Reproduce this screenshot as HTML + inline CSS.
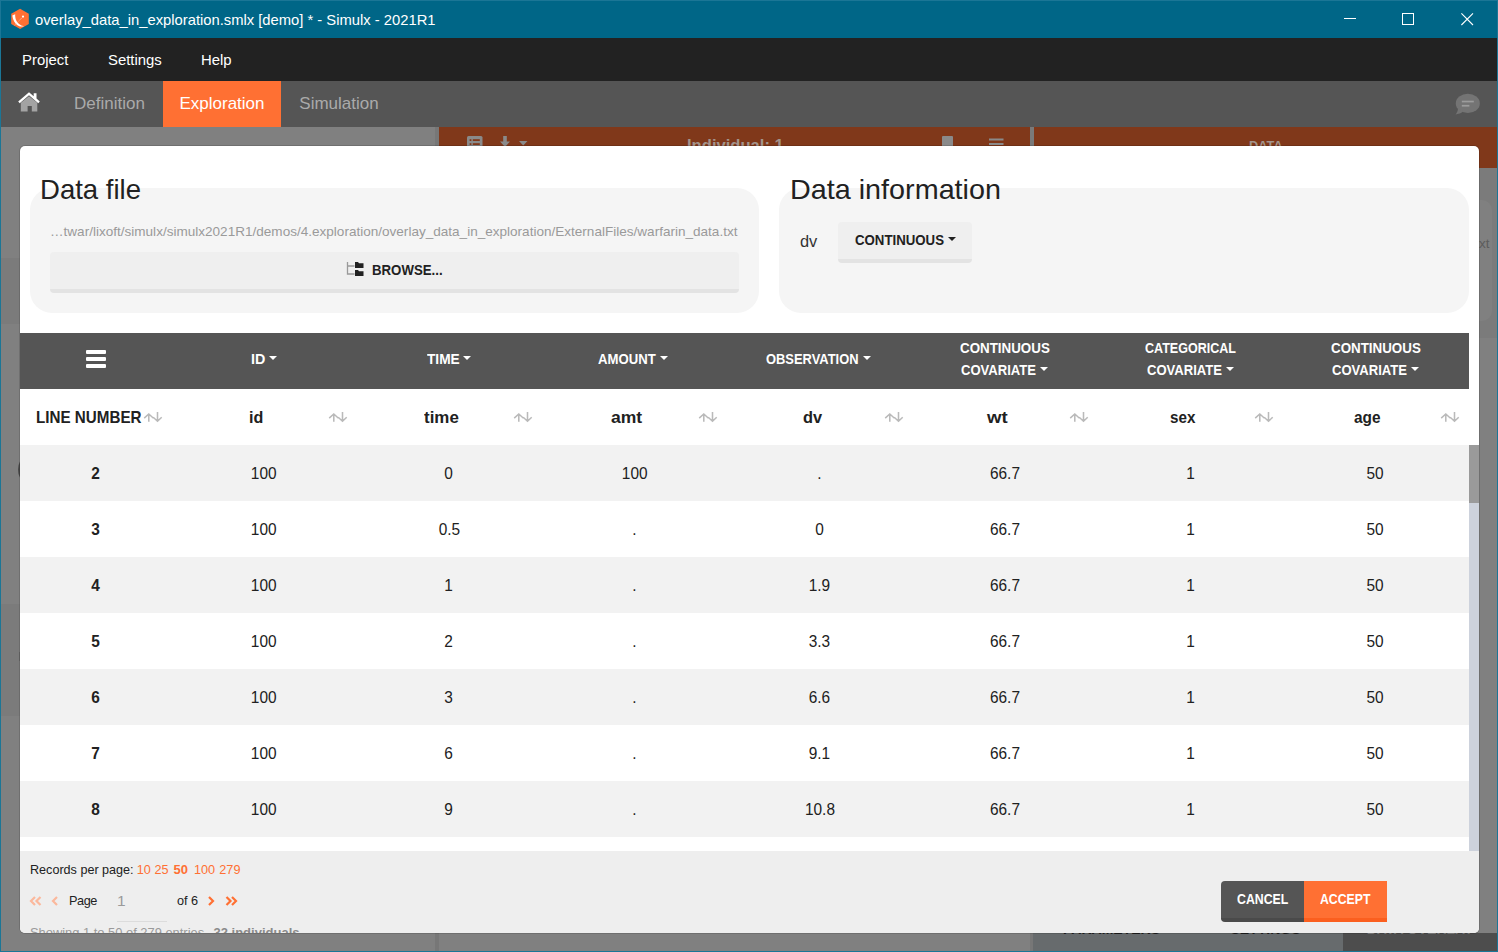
<!DOCTYPE html>
<html lang="en"><head><meta charset="utf-8"><title>Simulx</title>
<style>
*{box-sizing:border-box;margin:0;padding:0}
html,body{width:1498px;height:952px;overflow:hidden;background:#808080}
body{font-family:"Liberation Sans",sans-serif;color:#212121}
#win{position:relative;width:1498px;height:952px;overflow:hidden;background:#808080}
.abs{position:absolute}
.tx{display:inline-block;white-space:nowrap}
.fw{display:inline-block;white-space:nowrap;text-align:left}
.fi{display:inline-block;white-space:nowrap;transform-origin:0 50%}
/* title bar */
#title{position:absolute;left:0;top:0;width:1498px;height:38px;background:#006687;border-top:1px solid #1b7696}
#title .ttl{position:absolute;left:35px;top:9px;font-size:14.78px;color:#fff;white-space:nowrap;line-height:20px}
#edgeL{position:absolute;left:0;top:0;width:1px;height:952px;background:#1b7696;z-index:50}
#edgeR{position:absolute;right:0;top:0;width:1px;height:952px;background:#1b7696;z-index:50}
#edgeB{position:absolute;left:0;bottom:0;width:1498px;height:1px;background:#1b7696;z-index:50}
/* menu */
#menu{position:absolute;left:1px;top:38px;width:1496px;height:43px;background:#222}
#menu span{position:absolute;top:12px;font-size:14.9px;color:#fff;line-height:20px}
/* tabs */
#tabs{position:absolute;left:1px;top:81px;width:1496px;height:46px;background:#555}
#tabs .tab{position:absolute;top:0;height:46px;line-height:46px;font-size:17px;color:#aaa;text-align:center}
#tabs .tab.act{background:#ff7033;color:#fff}
/* background stuff */
.brown{position:absolute;background:#80381a}
/* modal */
#modal{position:absolute;left:20px;top:146px;width:1459px;height:787px;background:#fff;border-radius:5px;overflow:hidden;box-shadow:0 0 0 1px rgba(0,0,0,.13)}
.panel{position:absolute;background:#f5f5f5;border-radius:22px}
.h1{position:absolute;font-size:27.2px;line-height:34px;color:#212121;white-space:nowrap}
.path{position:absolute;left:30px;top:77px;font-size:13.56px;line-height:18px;color:#9a9a9a;white-space:nowrap}
.btn{position:absolute;background:#efefef;border-bottom:4px solid #e3e3e3;border-radius:4px;font-weight:bold;font-size:14.2px;color:#212121;text-align:center}
/* table */
.thead{position:absolute;left:0;top:187px;width:1449px;height:56px;background:#555}
.burger{position:absolute;left:65.5px;top:17px;width:20.5px;height:18px}
.burger i{display:block;height:4px;border-radius:1px;background:#fff;margin-bottom:3px}
.th{position:absolute;top:0;height:56px;color:#fff;font-weight:bold;font-size:14.2px;text-align:center;white-space:nowrap}
.th.one{line-height:52px}
.th.two{line-height:22px;padding-top:4px}
.caret{display:inline-block;width:0;height:0;border-left:4.3px solid transparent;border-right:4.3px solid transparent;border-top:4.6px solid #fff;margin-left:4px;vertical-align:middle;position:relative;top:-2.5px}
.subhead{position:absolute;left:0;top:243px;width:1449px;height:56px;background:#fff}
.sh{position:absolute;top:0;height:56px;line-height:56px;font-weight:bold;font-size:17.3px;color:#212121;text-align:center;padding-right:13px}
.sh .sort{position:absolute;right:8.5px;top:22px}
.sh.first{line-height:58px;text-align:left;padding-left:15.500px;padding-right:0;font-size:16.6px}
.sh.first .sort{right:auto;left:123.2px}
.tbody{position:absolute;left:0;top:299px;width:1449px;height:406px;overflow:hidden;background:#fff}
.tr{position:absolute;left:0;width:1449px;height:56px;background:#fff}
.tr.odd{background:#f2f2f2}
.td{position:absolute;top:0;height:56px;line-height:56px;text-align:center;font-size:16.4px;color:#212121}
.sq{display:inline-block;transform:scaleX(.94)}
.td.b{font-weight:bold}
.sbar{position:absolute;left:1449px;top:299px;width:10px;height:406px;background:#cdd2dc}
.sbar i{position:absolute;left:0;top:0;width:10px;height:58px;background:#9a9a9a}
.foot{position:absolute;left:0;top:705px;width:1459px;height:81.5px;background:#eee}
.foot .t{position:absolute;font-size:12.7px;line-height:18px;color:#212121;white-space:nowrap}
.or,.foot .t.or{color:#ff7033}

</style></head>
<body>
<div id="win">
<div id="title">
<svg class="abs" style="left:10px;top:7px" width="20" height="22" viewBox="0 0 20 22"><polygon points="10.1,0.8 18.8,5.8 18.8,16.1 10.1,21.1 1.2,16.1 1.2,5.8" fill="#ff7033"/><path d="M2.300 7.600C3 12.200 4.800 15.800 7.800 17.400S11.500 18.700 14.100 18.300C10.200 17.400 7.300 15.300 6 12C5.300 10 5.100 8.200 5.200 6.300Z" fill="#fff"/><path d="M4.600 17.300L12.300 9.400" fill="none" stroke="#ffe3d6" stroke-width="0.7" stroke-dasharray="1.1 0.7"/><circle cx="13" cy="8.600" r="1.100" fill="#fff"/></svg>
<div class="ttl">overlay_data_in_exploration.smlx [demo] * - Simulx - 2021R1</div>
<svg class="abs" style="left:1344px;top:17px" width="14" height="2"><rect width="12" height="1" y="0" fill="#fff"/></svg>
<svg class="abs" style="left:1402px;top:12px" width="13" height="13"><rect x="0.5" y="0.5" width="11" height="11" fill="none" stroke="#fff" stroke-width="1"/></svg>
<svg class="abs" style="left:1461px;top:12px" width="14" height="14"><path d="M0.400 0.400l11.600 11.600M12 0.400l-11.600 11.600" stroke="#fff" stroke-width="1.100" fill="none"/></svg>
</div>
<div id="menu"><span style="left:21px">Project</span><span style="left:107px">Settings</span><span style="left:200px">Help</span></div>
<div id="tabs">
<svg class="abs" style="left:16px;top:10px" width="24" height="22" viewBox="0 0 24 22"><path d="M3.800 11.800L12 5.200l8.300 6.600V20.400h-5.500v-5.400h-4.200V20.400H3.800z" fill="#a3a3a3"/><path d="M12 1.200L1.200 10.400l1.500 1.800L12 4.300l9.300 7.900 1.500-1.800-3.300-2.800V2.200h-2.800v3z" fill="#fff"/></svg>
<div class="tab" style="left:55px;width:107px">Definition</div>
<div class="tab act" style="left:162px;width:118px">Exploration</div>
<div class="tab" style="left:280px;width:116px">Simulation</div>
<svg class="abs" style="left:1453px;top:12px" width="27" height="23" viewBox="0 0 27 23"><ellipse cx="13.800" cy="10.400" rx="12" ry="9.600" fill="#747474"/><path d="M4 15.500C3.800 18 3 20 1.500 21.400 4.500 21.200 7 20.200 9 18.500z" fill="#747474"/><rect x="7.800" y="7.700" width="12" height="1.700" fill="#9c9c9c"/><rect x="7.800" y="11.900" width="7.600" height="1.700" fill="#9c9c9c"/></svg>
</div>
<!-- background (dimmed app) -->
<div class="abs" style="left:435px;top:127px;width:4px;height:825px;background:#777"></div>
<div class="abs" style="left:1px;top:258px;width:19px;height:66px;background:#7b7b7b"></div>
<div class="abs" style="left:1px;top:604px;width:19px;height:112px;background:#7b7b7b"></div>
<div class="abs" style="left:17.500px;top:459px;width:12px;height:21px;border-radius:50%;border-left:2px solid #484848"></div>
<div class="abs" style="left:18.500px;top:652px;width:3px;height:9px;background:#6a6a6a"></div>
<div class="abs" style="left:1470px;top:168px;width:27px;height:170px;background:#7b7b7b"></div>
<div class="abs" style="left:1400px;top:200px;width:92px;height:121px;background:#808080;border-radius:10px"></div>
<div class="abs" style="left:1400px;top:235px;width:89.500px;text-align:right;font-size:13.500px;line-height:18px;color:#5c5c5c">data.txt</div>
<div class="brown" style="left:439px;top:127px;width:591px;height:41px"></div>
<div class="abs" style="left:1030px;top:127px;width:4px;height:41px;background:#7a7a7a"></div>
<div class="brown" style="left:1034px;top:127px;width:463px;height:41px"></div>
<svg class="abs" style="left:467px;top:136px" width="16" height="14" viewBox="0 0 16 14"><rect x="0" y="0" width="15.500" height="14" rx="1.5" fill="#8a8a8a"/><rect x="2.600" y="3.200" width="1.800" height="1.800" fill="#80381a"/><rect x="5.800" y="3.200" width="7" height="1.800" fill="#80381a"/><rect x="2.600" y="7.200" width="1.800" height="1.800" fill="#80381a"/><rect x="5.800" y="7.200" width="7" height="1.800" fill="#80381a"/></svg>
<svg class="abs" style="left:499px;top:136px" width="12" height="14" viewBox="0 0 12 14"><path d="M4.200 0h3.600v5.500H11L6 11 1 5.500h3.200z" fill="#8a8a8a"/></svg>
<svg class="abs" style="left:519px;top:141px" width="9" height="5" viewBox="0 0 9 5"><path d="M0 0h8.500L4.250 4.500z" fill="#8a8a8a"/></svg>
<svg class="abs" style="left:942px;top:136px" width="12" height="12" viewBox="0 0 12 12"><rect x="0" y="0" width="11" height="12" rx="1" fill="#8a8a8a"/></svg>
<svg class="abs" style="left:989px;top:138px" width="15" height="10" viewBox="0 0 15 10"><rect x="0" y="0.500" width="14.500" height="2" fill="#8a8a8a"/><rect x="0" y="5" width="14.500" height="2" fill="#8a8a8a"/></svg>
<div class="abs" style="left:687px;top:135.700px;font-size:16.6px;font-weight:bold;color:#a3948c;line-height:20px">Individual: 1</div>
<div class="abs" style="left:1249px;top:138px;font-size:12.8px;font-weight:bold;color:#a3948c;line-height:16px">DATA</div>
<div class="abs" style="left:1033px;top:933px;width:310px;height:18px;background:#676b6d"></div>
<div class="abs" style="left:1343px;top:933px;width:154px;height:18px;background:#4d4d4d"></div>
<div class="abs" style="left:1030px;top:933px;width:3px;height:18px;background:#777"></div>
<div class="abs" style="left:1033px;top:920.7px;width:157px;text-align:center;font-size:14px;font-weight:bold;color:#1e1e1e;line-height:16px">PARAMETERS</div>
<div class="abs" style="left:1188px;top:920.7px;width:155px;text-align:center;font-size:14px;font-weight:bold;color:#1e1e1e;line-height:16px">SETTINGS</div>
<div class="abs" style="left:1343px;top:920.7px;width:154px;text-align:center;font-size:14px;font-weight:bold;color:#868686;line-height:16px">DATA OVERLAY</div>
<!-- modal -->
<div id="modal">
<div class="panel" style="left:10px;top:42px;width:729px;height:125px"></div>
<div class="panel" style="left:759px;top:42px;width:690px;height:125px"></div>
<div class="h1" style="left:20px;top:26.500px"><span class="fw" style="width:101.00px"><span class="fi" style="transform:scaleX(1.0125)">Data file</span></span></div>
<div class="h1" style="left:769.500px;top:26.500px"><span class="fw" style="width:211.00px"><span class="fi" style="transform:scaleX(1.0577)">Data information</span></span></div>
<div class="path">…twar/lixoft/simulx/simulx2021R1/demos/4.exploration/overlay_data_in_exploration/ExternalFiles/warfarin_data.txt</div>
<div class="btn" style="left:30px;top:106px;width:689px;height:41px;line-height:37px;padding-left:5.5px">
<svg style="vertical-align:middle;position:relative;top:-2px;margin-right:8px;margin-left:-5px" width="18" height="16" viewBox="0 0 18 16"><path d="M1.5 1v12h7M1.500 5h7" fill="none" stroke="#999" stroke-width="1.300"/><path d="M9 1h3l1 1.200h4.500V7H9zM9 9h3l1 1.200h4.500V15H9z" fill="#212121"/></svg><span class="fw" style="width:70.60px"><span class="fi" style="transform:scaleX(0.9330)">BROWSE...</span></span></div>
<div class="abs" style="left:780px;top:85px;font-size:16.400px;line-height:20px;color:#333">dv</div>
<div class="btn" style="left:818px;top:76px;width:134px;height:41px;line-height:37px"><span class="fw" style="width:89.00px"><span class="fi" style="transform:scaleX(0.9332)">CONTINUOUS</span></span><span class="caret" style="border-top-color:#212121"></span></div>
<div class="thead">
<div class="burger"><i></i><i></i><i></i></div>
<div class="th one" style="left:151.0px;width:185.3px"><span class="fw" style="width:14.30px"><span class="fi" style="transform:scaleX(1.0079)">ID</span></span><span class="caret"></span></div>
<div class="th one" style="left:336.3px;width:185.3px"><span class="fw" style="width:32.70px"><span class="fi" style="transform:scaleX(0.9649)">TIME</span></span><span class="caret"></span></div>
<div class="th one" style="left:520.6px;width:185.3px"><span class="fw" style="width:57.70px"><span class="fi" style="transform:scaleX(0.9267)">AMOUNT</span></span><span class="caret"></span></div>
<div class="th one" style="left:705.9px;width:185.3px"><span class="fw" style="width:92.50px"><span class="fi" style="transform:scaleX(0.9096)">OBSERVATION</span></span><span class="caret"></span></div>
<div class="th two" style="left:892.2px;width:185.3px"><span class="fw" style="width:89.80px"><span class="fi" style="transform:scaleX(0.9415)">CONTINUOUS</span></span><br><span class="fw" style="width:75.00px"><span class="fi" style="transform:scaleX(0.9208)">COVARIATE</span></span><span class="caret"></span></div>
<div class="th two" style="left:1077.5px;width:185.3px"><span class="fw" style="width:91.00px"><span class="fi" style="transform:scaleX(0.8836)">CATEGORICAL</span></span><br><span class="fw" style="width:75.00px"><span class="fi" style="transform:scaleX(0.9208)">COVARIATE</span></span><span class="caret"></span></div>
<div class="th two" style="left:1262.8px;width:185.3px"><span class="fw" style="width:89.80px"><span class="fi" style="transform:scaleX(0.9415)">CONTINUOUS</span></span><br><span class="fw" style="width:75.00px"><span class="fi" style="transform:scaleX(0.9208)">COVARIATE</span></span><span class="caret"></span></div>
</div>
<div class="subhead">
<div class="sh first" style="left:0;width:151px"><span class="fw" style="width:105.50px"><span class="fi" style="transform:scaleX(0.9155)">LINE NUMBER</span></span><svg class="sort" viewBox="0 0 20 12" width="20" height="12"><path d="M5.800 10.800V3.200M1.200 7.100l4.600-4.100 4.400 4M14.500 1.100v8.800M10.200 6.300l4.300 3.900 4.200-3.900" fill="none" stroke="#bababa" stroke-width="1.550"/></svg></div>
<div class="sh" style="left:151.0px;width:185.3px;padding-right:14.5px"><span class="fw" style="width:14.30px"><span class="fi" style="transform:scaleX(0.9310)">id</span></span><svg class="sort" viewBox="0 0 20 12" width="20" height="12"><path d="M5.800 10.800V3.200M1.200 7.100l4.600-4.100 4.400 4M14.500 1.100v8.800M10.200 6.300l4.300 3.900 4.200-3.900" fill="none" stroke="#bababa" stroke-width="1.550"/></svg></div>
<div class="sh" style="left:336.3px;width:185.3px;padding-right:14.5px"><span class="fw" style="width:34.80px"><span class="fi" style="transform:scaleX(0.9790)">time</span></span><svg class="sort" viewBox="0 0 20 12" width="20" height="12"><path d="M5.800 10.800V3.200M1.200 7.100l4.600-4.100 4.400 4M14.500 1.100v8.800M10.200 6.300l4.300 3.900 4.200-3.900" fill="none" stroke="#bababa" stroke-width="1.550"/></svg></div>
<div class="sh" style="left:521.6px;width:185.3px;padding-right:14.5px"><span class="fw" style="width:31.20px"><span class="fi" style="transform:scaleX(1.0151)">amt</span></span><svg class="sort" viewBox="0 0 20 12" width="20" height="12"><path d="M5.800 10.800V3.200M1.200 7.100l4.600-4.100 4.400 4M14.500 1.100v8.800M10.200 6.300l4.300 3.900 4.200-3.900" fill="none" stroke="#bababa" stroke-width="1.550"/></svg></div>
<div class="sh" style="left:706.9px;width:185.3px;padding-right:14.5px"><span class="fw" style="width:19.10px"><span class="fi" style="transform:scaleX(0.9469)">dv</span></span><svg class="sort" viewBox="0 0 20 12" width="20" height="12"><path d="M5.800 10.800V3.200M1.200 7.100l4.600-4.100 4.400 4M14.500 1.100v8.800M10.200 6.300l4.300 3.900 4.200-3.900" fill="none" stroke="#bababa" stroke-width="1.550"/></svg></div>
<div class="sh" style="left:892.2px;width:185.3px;padding-right:15.5px"><span class="fw" style="width:20.60px"><span class="fi" style="transform:scaleX(1.0727)">wt</span></span><svg class="sort" viewBox="0 0 20 12" width="20" height="12"><path d="M5.800 10.800V3.200M1.200 7.100l4.600-4.100 4.400 4M14.500 1.100v8.800M10.200 6.300l4.300 3.900 4.200-3.900" fill="none" stroke="#bababa" stroke-width="1.550"/></svg></div>
<div class="sh" style="left:1077.5px;width:185.3px;padding-right:15.5px"><span class="fw" style="width:25.40px"><span class="fi" style="transform:scaleX(0.8806)">sex</span></span><svg class="sort" viewBox="0 0 20 12" width="20" height="12"><path d="M5.800 10.800V3.200M1.200 7.100l4.600-4.100 4.400 4M14.500 1.100v8.800M10.200 6.300l4.300 3.900 4.200-3.900" fill="none" stroke="#bababa" stroke-width="1.550"/></svg></div>
<div class="sh" style="left:1262.8px;width:185.3px;padding-right:15.5px"><span class="fw" style="width:26.50px"><span class="fi" style="transform:scaleX(0.8898)">age</span></span><svg class="sort" viewBox="0 0 20 12" width="20" height="12"><path d="M5.800 10.800V3.200M1.200 7.100l4.600-4.100 4.400 4M14.500 1.100v8.800M10.200 6.300l4.300 3.900 4.200-3.900" fill="none" stroke="#bababa" stroke-width="1.550"/></svg></div>
</div>
<div class="tbody">
<div class="tr odd" style="top:0px">
<div class="td b" style="left:0.0px;width:151.0px"><span class="sq">2</span></div>
<div class="td" style="left:151.0px;width:185.3px"><span class="sq">100</span></div>
<div class="td" style="left:336.3px;width:185.3px"><span class="sq">0</span></div>
<div class="td" style="left:521.6px;width:185.3px"><span class="sq">100</span></div>
<div class="td" style="left:706.9px;width:185.3px"><span class="sq">.</span></div>
<div class="td" style="left:892.2px;width:185.3px"><span class="sq">66.7</span></div>
<div class="td" style="left:1077.5px;width:185.3px"><span class="sq">1</span></div>
<div class="td" style="left:1262.8px;width:185.3px"><span class="sq">50</span></div>
</div>
<div class="tr" style="top:56px">
<div class="td b" style="left:0.0px;width:151.0px"><span class="sq">3</span></div>
<div class="td" style="left:151.0px;width:185.3px"><span class="sq">100</span></div>
<div class="td" style="left:336.3px;width:185.3px"><span class="sq">0.5</span></div>
<div class="td" style="left:521.6px;width:185.3px"><span class="sq">.</span></div>
<div class="td" style="left:706.9px;width:185.3px"><span class="sq">0</span></div>
<div class="td" style="left:892.2px;width:185.3px"><span class="sq">66.7</span></div>
<div class="td" style="left:1077.5px;width:185.3px"><span class="sq">1</span></div>
<div class="td" style="left:1262.8px;width:185.3px"><span class="sq">50</span></div>
</div>
<div class="tr odd" style="top:112px">
<div class="td b" style="left:0.0px;width:151.0px"><span class="sq">4</span></div>
<div class="td" style="left:151.0px;width:185.3px"><span class="sq">100</span></div>
<div class="td" style="left:336.3px;width:185.3px"><span class="sq">1</span></div>
<div class="td" style="left:521.6px;width:185.3px"><span class="sq">.</span></div>
<div class="td" style="left:706.9px;width:185.3px"><span class="sq">1.9</span></div>
<div class="td" style="left:892.2px;width:185.3px"><span class="sq">66.7</span></div>
<div class="td" style="left:1077.5px;width:185.3px"><span class="sq">1</span></div>
<div class="td" style="left:1262.8px;width:185.3px"><span class="sq">50</span></div>
</div>
<div class="tr" style="top:168px">
<div class="td b" style="left:0.0px;width:151.0px"><span class="sq">5</span></div>
<div class="td" style="left:151.0px;width:185.3px"><span class="sq">100</span></div>
<div class="td" style="left:336.3px;width:185.3px"><span class="sq">2</span></div>
<div class="td" style="left:521.6px;width:185.3px"><span class="sq">.</span></div>
<div class="td" style="left:706.9px;width:185.3px"><span class="sq">3.3</span></div>
<div class="td" style="left:892.2px;width:185.3px"><span class="sq">66.7</span></div>
<div class="td" style="left:1077.5px;width:185.3px"><span class="sq">1</span></div>
<div class="td" style="left:1262.8px;width:185.3px"><span class="sq">50</span></div>
</div>
<div class="tr odd" style="top:224px">
<div class="td b" style="left:0.0px;width:151.0px"><span class="sq">6</span></div>
<div class="td" style="left:151.0px;width:185.3px"><span class="sq">100</span></div>
<div class="td" style="left:336.3px;width:185.3px"><span class="sq">3</span></div>
<div class="td" style="left:521.6px;width:185.3px"><span class="sq">.</span></div>
<div class="td" style="left:706.9px;width:185.3px"><span class="sq">6.6</span></div>
<div class="td" style="left:892.2px;width:185.3px"><span class="sq">66.7</span></div>
<div class="td" style="left:1077.5px;width:185.3px"><span class="sq">1</span></div>
<div class="td" style="left:1262.8px;width:185.3px"><span class="sq">50</span></div>
</div>
<div class="tr" style="top:280px">
<div class="td b" style="left:0.0px;width:151.0px"><span class="sq">7</span></div>
<div class="td" style="left:151.0px;width:185.3px"><span class="sq">100</span></div>
<div class="td" style="left:336.3px;width:185.3px"><span class="sq">6</span></div>
<div class="td" style="left:521.6px;width:185.3px"><span class="sq">.</span></div>
<div class="td" style="left:706.9px;width:185.3px"><span class="sq">9.1</span></div>
<div class="td" style="left:892.2px;width:185.3px"><span class="sq">66.7</span></div>
<div class="td" style="left:1077.5px;width:185.3px"><span class="sq">1</span></div>
<div class="td" style="left:1262.8px;width:185.3px"><span class="sq">50</span></div>
</div>
<div class="tr odd" style="top:336px">
<div class="td b" style="left:0.0px;width:151.0px"><span class="sq">8</span></div>
<div class="td" style="left:151.0px;width:185.3px"><span class="sq">100</span></div>
<div class="td" style="left:336.3px;width:185.3px"><span class="sq">9</span></div>
<div class="td" style="left:521.6px;width:185.3px"><span class="sq">.</span></div>
<div class="td" style="left:706.9px;width:185.3px"><span class="sq">10.8</span></div>
<div class="td" style="left:892.2px;width:185.3px"><span class="sq">66.7</span></div>
<div class="td" style="left:1077.5px;width:185.3px"><span class="sq">1</span></div>
<div class="td" style="left:1262.8px;width:185.3px"><span class="sq">50</span></div>
</div>
<div class="tr" style="top:392px">
<div class="td b" style="left:0.0px;width:151.0px"><span class="sq">9</span></div>
<div class="td" style="left:151.0px;width:185.3px"><span class="sq">100</span></div>
<div class="td" style="left:336.3px;width:185.3px"><span class="sq">12</span></div>
<div class="td" style="left:521.6px;width:185.3px"><span class="sq">.</span></div>
<div class="td" style="left:706.9px;width:185.3px"><span class="sq">8.6</span></div>
<div class="td" style="left:892.2px;width:185.3px"><span class="sq">66.7</span></div>
<div class="td" style="left:1077.5px;width:185.3px"><span class="sq">1</span></div>
<div class="td" style="left:1262.8px;width:185.3px"><span class="sq">50</span></div>
</div>
</div>
<div class="sbar"><i></i></div>
<div class="foot">
<div class="t" style="left:10px;top:10px;font-size:12.6px">Records per page:</div>
<div class="t or" style="left:116.800px;top:10px">10</div>
<div class="t or" style="left:134.500px;top:10px">25</div>
<div class="t or" style="left:153.600px;top:10px;font-weight:bold;font-size:13px">50</div>
<div class="t or" style="left:173.900px;top:10px">100</div>
<div class="t or" style="left:199.300px;top:10px">279</div>
<div class="t" style="left:49px;top:41px;letter-spacing:-.4px">Page</div>
<div class="t" style="left:97px;top:41px;font-size:15.500px;color:#9a9a9a">1</div>
<div class="abs" style="left:97px;top:70px;width:50px;height:1px;background:#dcdcdc"></div>
<div class="t" style="left:157px;top:41px">of 6</div>
<svg class="abs" style="left:9.300px;top:44.600px" width="14" height="10" viewBox="0 0 14 10"><path d="M6 1L2 5l4 4M11.5 1l-4 4 4 4" fill="none" stroke="#fbb89c" stroke-width="2.200"/></svg>
<svg class="abs" style="left:31px;top:45px" width="8" height="10" viewBox="0 0 8 10"><path d="M6 1L2 5l4 4" fill="none" stroke="#fbb89c" stroke-width="2.200"/></svg>
<svg class="abs" style="left:187px;top:45px" width="8" height="10" viewBox="0 0 8 10"><path d="M2 1l4 4-4 4" fill="none" stroke="#ff7033" stroke-width="2.200"/></svg>
<svg class="abs" style="left:204px;top:45px" width="14" height="10" viewBox="0 0 14 10"><path d="M2.500 1l4 4-4 4M8 1l4 4-4 4" fill="none" stroke="#ff7033" stroke-width="2.200"/></svg>
<div class="t" style="left:10px;top:72.600px;color:#9a9a9a;font-size:12.900px">Showing 1 to 50 of 279 entries.</div>
<div class="t" style="left:193.500px;top:72.600px;color:#8a8a8a;font-size:13px;font-weight:bold">32 individuals</div>
<div class="abs" style="left:1201px;top:30px;width:83px;height:41px;background:#555;border-bottom:4px solid #4a4a4a;border-radius:4px 0 0 4px;color:#fff;font-weight:bold;font-size:14.2px;line-height:37px;text-align:center"><span class="fw" style="width:51.30px"><span class="fi" style="transform:scaleX(0.8677)">CANCEL</span></span></div>
<div class="abs" style="left:1284px;top:30px;width:83px;height:41px;background:#ff7033;border-bottom:4px solid #fb5f1f;color:#fff;font-weight:bold;font-size:14.2px;line-height:37px;text-align:center"><span class="fw" style="width:50.50px"><span class="fi" style="transform:scaleX(0.8656)">ACCEPT</span></span></div>
</div>
</div>
<div id="edgeL"></div><div id="edgeL2"></div><div id="edgeR"></div><div id="edgeB"></div>
</div>
</body></html>
